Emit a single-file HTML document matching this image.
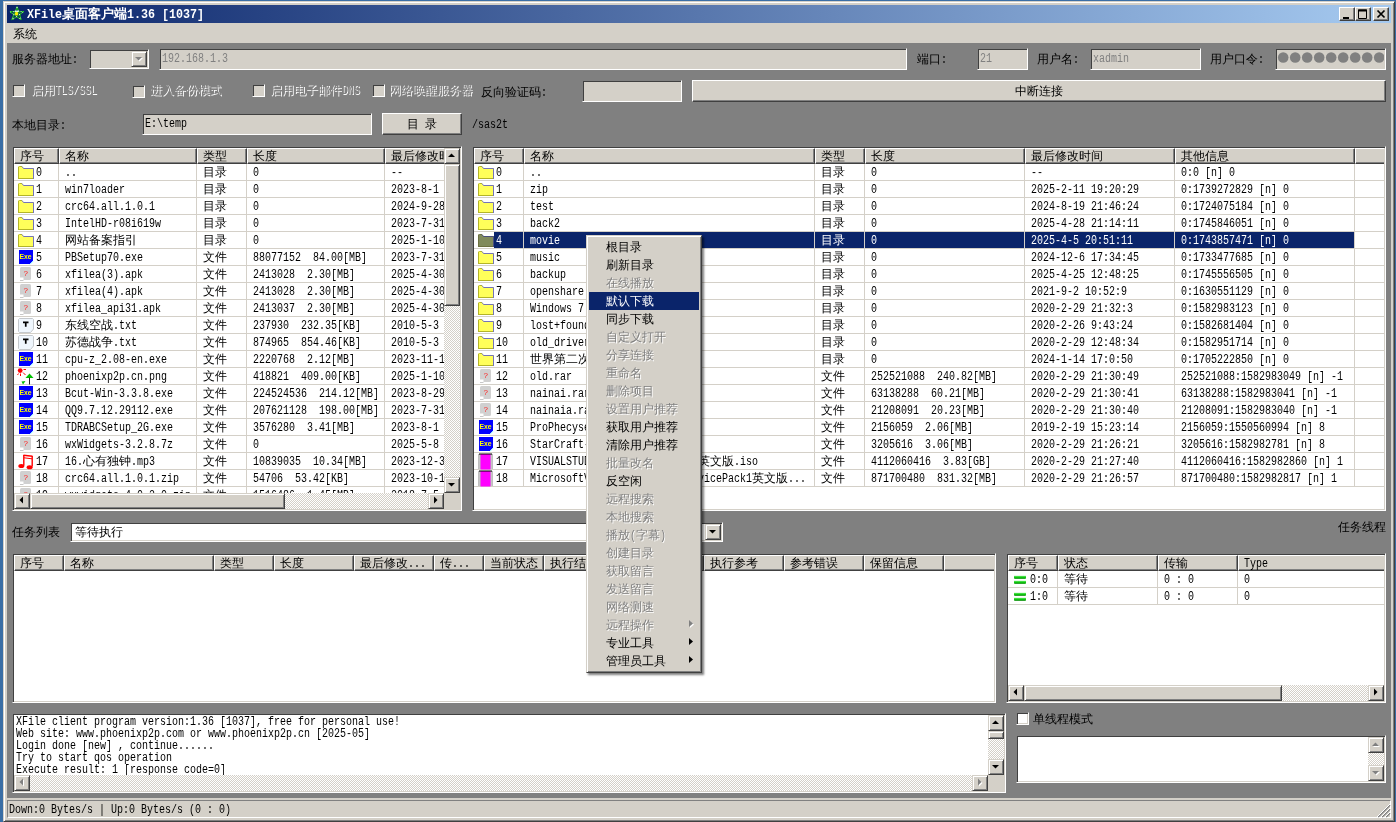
<!DOCTYPE html>
<html><head><meta charset="utf-8"><title>XFile</title>
<style>
html,body{margin:0;padding:0}
html{overflow:hidden}
body{width:1396px;height:822px;overflow:hidden;background:#3a6ea5;position:relative;font:12px/16px "Liberation Sans",sans-serif;color:#000}
div,svg{position:absolute;box-sizing:border-box}
i{font-style:normal}
.t{white-space:nowrap;overflow:hidden;height:16px;line-height:16px;font:12px/16px "Liberation Sans",sans-serif}
.t i{display:inline-block;position:relative;height:16px;vertical-align:top;white-space:pre;overflow:visible}
.a{font:12px/16px "Liberation Mono",monospace;transform:scaleX(.83333);transform-origin:0 0;top:0}
.c{font:12px/16px "Liberation Sans",sans-serif;overflow:hidden!important;top:-1px}
.w{color:#fff}
.g{color:#808080}
.dis{color:#808080;text-shadow:1px 1px 0 #fff}
.bold .a{font-weight:bold}
.ttl .a{transform:scaleX(.9722)}
.ttl .c{font-size:13px}
.bold .c{font-weight:bold}
.win{background:#d4d0c8;border:1px solid;border-color:#d4d0c8 #404040 #404040 #d4d0c8;box-shadow:inset 1px 1px 0 #fff,inset -1px -1px 0 #808080}
.cli{background:#808080}
.sunk{border:1px solid;border-color:#808080 #fff #fff #808080;box-shadow:inset 1px 1px 0 #404040,inset -1px -1px 0 #d4d0c8;background:#fff}
.face{background:#d4d0c8}
.btn{background:#d4d0c8;border:1px solid;border-color:#fff #404040 #404040 #fff;box-shadow:inset -1px -1px 0 #808080}
.sb{width:16px;height:16px;background:#d4d0c8;border:1px solid;border-color:#d4d0c8 #404040 #404040 #d4d0c8;box-shadow:inset 1px 1px 0 #fff,inset -1px -1px 0 #808080}
.th{background:#d4d0c8;border:1px solid;border-color:#d4d0c8 #404040 #404040 #d4d0c8;box-shadow:inset 1px 1px 0 #fff,inset -1px -1px 0 #808080}
.trk{background:repeating-conic-gradient(#fff 0 25%,#d4d0c8 0 50%) 0 0/2px 2px}
.hd{height:16px;background:#d4d0c8;border:1px solid;border-color:#fff #404040 #404040 #fff;box-shadow:inset -1px -1px 0 #808080;overflow:hidden}
.hx{border-color:#d4d0c8 #d4d0c8 #404040 #d4d0c8;box-shadow:inset 0 -1px 0 #808080}
.clip{overflow:hidden}
.gl{background:#d4d0c8}
.sel{background:#0a246a}
.ic{overflow:hidden}
.cb{width:13px;height:13px;border:1px solid;border-color:#808080 #fff #fff #808080;box-shadow:inset 1px 1px 0 #404040,inset -1px -1px 0 #d4d0c8}
.mi{left:2px;width:110px;height:18px}
.mi .t{left:17px;top:2px}
.hl{background:#0a246a}
</style></head><body><div id="root" style="left:0;top:0;width:1396px;height:822px;overflow:hidden;will-change:transform">

<div class="win" style="left:3px;top:1px;width:1392px;height:821px;"></div>
<div class="" style="left:7px;top:5px;width:1384px;height:18px;background:linear-gradient(90deg,#0a246a,#a6caf0)"></div>
<svg style="left:8px;top:5px" width="18" height="18" viewBox="0 0 18 18"><g transform="translate(9 9) scale(.9) translate(-9 -9.200)"><path d="M9.1 1.2L13.5 15.5L1.2 6.6H16.5L3.3 15.700Z" fill="none" stroke="#14b414" stroke-width="1"/><path d="M9.1 1.2L11 6.500L16.5 6.5L12.2 10L13.5 15.5L8.600 12.4L3.3 15.7L5.3 10L1.2 6.600L7.2 6.500Z" fill="none" stroke="#22c022" stroke-width=".8"/><path d="M9.1 1.2L13.5 15.5L1.2 6.6H16.5L3.3 15.700Z" fill="none" stroke="#fff" stroke-width="1" stroke-dasharray="1 3.2" opacity=".85"/><path d="M6.5 6.200H11" stroke="#e8fff0" stroke-width="1.4"/><ellipse cx="8.5" cy="8.800" rx="1.9" ry="2.1" fill="#f6ee00"/></g></svg>
<div class="t w bold ttl" style="left:27px;top:7px;width:300px"><i class="a" style="width:35px">XFile</i><i class="c" style="width:65px">桌面客户端</i><i class="a" style="width:77px">1.36 [1037]</i></div>
<div class="btn" style="left:1339px;top:7px;width:16px;height:14px;"><svg width="14" height="12" viewBox="0 0 14 12" style="left:0;top:0"><path d="M3 9H9V11H3Z" fill="#000"/></svg></div>
<div class="btn" style="left:1355px;top:7px;width:16px;height:14px;"><svg width="14" height="12" viewBox="0 0 14 12" style="left:0;top:0"><path d="M2.5 2H10.500V10.500H2.5Z" fill="none" stroke="#000"/><path d="M2 2.500H11" stroke="#000" stroke-width="2"/></svg></div>
<div class="btn" style="left:1373px;top:7px;width:16px;height:14px;"><svg width="14" height="12" viewBox="0 0 14 12" style="left:0;top:0"><path d="M3.5 2.5L10.5 9.5M10.5 2.5L3.5 9.5" stroke="#000" stroke-width="1.7"/></svg></div>
<div class="t " style="left:13px;top:27px;width:60px;"><i class="c" style="width:24px">系统</i></div>
<div class="cli" style="left:7px;top:43px;width:1384px;height:755px;"></div>
<div class="t " style="left:12px;top:52px;width:80px;"><i class="c" style="width:60px">服务器地址</i><i class="a" style="width:6px">:</i></div>
<div class="sunk face" style="left:89px;top:49px;width:60px;height:20px;"></div>
<div class="sb" style="left:131px;top:51px;width:16px;height:16px;"><svg width="16" height="16" viewBox="0 0 16 16" style="left:-1px;top:-1px"><path d="M5 7L8.5 10.5L12 7Z" fill="#fff"/><path d="M4 6L7.5 9.5L11 6Z" fill="#808080"/></svg></div>
<div class="sunk face" style="left:159px;top:48px;width:748px;height:22px;"></div>
<div class="t g" style="left:162px;top:51px;width:200px;"><i class="a" style="width:66px">192.168.1.3</i></div>
<div class="t " style="left:917px;top:52px;width:60px;"><i class="c" style="width:24px">端口</i><i class="a" style="width:6px">:</i></div>
<div class="sunk face" style="left:977px;top:48px;width:51px;height:22px;"></div>
<div class="t g" style="left:980px;top:51px;width:40px;"><i class="a" style="width:12px">21</i></div>
<div class="t " style="left:1037px;top:52px;width:60px;"><i class="c" style="width:36px">用户名</i><i class="a" style="width:6px">:</i></div>
<div class="sunk face" style="left:1090px;top:48px;width:111px;height:22px;"></div>
<div class="t g" style="left:1093px;top:51px;width:80px;"><i class="a" style="width:36px">xadmin</i></div>
<div class="t " style="left:1210px;top:52px;width:70px;"><i class="c" style="width:48px">用户口令</i><i class="a" style="width:6px">:</i></div>
<div class="sunk face" style="left:1275px;top:48px;width:111px;height:22px;"></div>
<svg style="left:1277px;top:51px" width="107" height="16" viewBox="0 0 107 16"><circle cx="6.2" cy="6.5" r="5.3" fill="#808080"/><circle cx="18.2" cy="6.5" r="5.3" fill="#808080"/><circle cx="30.2" cy="6.5" r="5.3" fill="#808080"/><circle cx="42.2" cy="6.5" r="5.3" fill="#808080"/><circle cx="54.2" cy="6.5" r="5.3" fill="#808080"/><circle cx="66.2" cy="6.5" r="5.3" fill="#808080"/><circle cx="78.2" cy="6.5" r="5.3" fill="#808080"/><circle cx="90.2" cy="6.5" r="5.3" fill="#808080"/><circle cx="102.2" cy="6.5" r="5.3" fill="#808080"/><circle cx="114.2" cy="6.5" r="5.3" fill="#808080"/></svg>
<div class="cb face" style="left:12px;top:84px;width:13px;height:13px;"></div>
<div class="t dis" style="left:31px;top:83px;width:110px;"><i class="c" style="width:24px">启用</i><i class="a" style="width:42px">TLS/SSL</i></div>
<div class="cb face" style="left:132px;top:85px;width:13px;height:13px;"></div>
<div class="t dis" style="left:150px;top:83px;width:110px;"><i class="c" style="width:72px">进入备份模式</i></div>
<div class="cb face" style="left:252px;top:84px;width:13px;height:13px;"></div>
<div class="t dis" style="left:270px;top:83px;width:110px;"><i class="c" style="width:72px">启用电子邮件</i><i class="a" style="width:18px">DNS</i></div>
<div class="cb face" style="left:372px;top:84px;width:13px;height:13px;"></div>
<div class="t dis" style="left:389px;top:83px;width:110px;"><i class="c" style="width:84px">网络唤醒服务器</i></div>
<div class="t " style="left:481px;top:85px;width:80px;"><i class="c" style="width:60px">反向验证码</i><i class="a" style="width:6px">:</i></div>
<div class="sunk face" style="left:582px;top:80px;width:100px;height:22px;"></div>
<div class="btn" style="left:692px;top:80px;width:694px;height:22px;"></div>
<div class="t " style="left:1015px;top:84px;width:60px;"><i class="c" style="width:48px">中断连接</i></div>
<div class="t " style="left:12px;top:118px;width:80px;"><i class="c" style="width:48px">本地目录</i><i class="a" style="width:6px">:</i></div>
<div class="sunk face" style="left:142px;top:113px;width:230px;height:22px;"></div>
<div class="t " style="left:145px;top:116px;width:200px;"><i class="a" style="width:42px">E:\temp</i></div>
<div class="btn" style="left:382px;top:113px;width:80px;height:22px;"></div>
<div class="t " style="left:407px;top:117px;width:14px;"><i class="c" style="width:12px">目</i></div>
<div class="t " style="left:425px;top:117px;width:14px;"><i class="c" style="width:12px">录</i></div>
<div class="t " style="left:472px;top:117px;width:100px;"><i class="a" style="width:36px">/sas2t</i></div>
<div class="sunk" style="left:12px;top:146px;width:450px;height:365px;"></div>
<div class="clip" style="left:14px;top:148px;width:430px;height:16px">
<div class="hd" style="left:0px;top:0;width:45px"><div class="t" style="left:5px;top:0px;width:38px"><i class="c" style="width:24px">序号</i></div></div>
<div class="hd" style="left:45px;top:0;width:138px"><div class="t" style="left:5px;top:0px;width:131px"><i class="c" style="width:24px">名称</i></div></div>
<div class="hd" style="left:183px;top:0;width:50px"><div class="t" style="left:5px;top:0px;width:43px"><i class="c" style="width:24px">类型</i></div></div>
<div class="hd" style="left:233px;top:0;width:138px"><div class="t" style="left:5px;top:0px;width:131px"><i class="c" style="width:24px">长度</i></div></div>
<div class="hd" style="left:371px;top:0;width:150px"><div class="t" style="left:5px;top:0px;width:143px"><i class="c" style="width:72px">最后修改时间</i></div></div>
</div>
<div class="clip" style="left:14px;top:164px;width:430px;height:329px">
<div class="gl" style="left:0;top:16px;width:430px;height:1px"></div>
<div class="gl" style="left:0;top:33px;width:430px;height:1px"></div>
<div class="gl" style="left:0;top:50px;width:430px;height:1px"></div>
<div class="gl" style="left:0;top:67px;width:430px;height:1px"></div>
<div class="gl" style="left:0;top:84px;width:430px;height:1px"></div>
<div class="gl" style="left:0;top:101px;width:430px;height:1px"></div>
<div class="gl" style="left:0;top:118px;width:430px;height:1px"></div>
<div class="gl" style="left:0;top:135px;width:430px;height:1px"></div>
<div class="gl" style="left:0;top:152px;width:430px;height:1px"></div>
<div class="gl" style="left:0;top:169px;width:430px;height:1px"></div>
<div class="gl" style="left:0;top:186px;width:430px;height:1px"></div>
<div class="gl" style="left:0;top:203px;width:430px;height:1px"></div>
<div class="gl" style="left:0;top:220px;width:430px;height:1px"></div>
<div class="gl" style="left:0;top:237px;width:430px;height:1px"></div>
<div class="gl" style="left:0;top:254px;width:430px;height:1px"></div>
<div class="gl" style="left:0;top:271px;width:430px;height:1px"></div>
<div class="gl" style="left:0;top:288px;width:430px;height:1px"></div>
<div class="gl" style="left:0;top:305px;width:430px;height:1px"></div>
<div class="gl" style="left:0;top:322px;width:430px;height:1px"></div>
<div class="gl" style="left:0;top:339px;width:430px;height:1px"></div>
<div class="gl" style="left:44px;top:0;width:1px;height:329px"></div>
<div class="gl" style="left:182px;top:0;width:1px;height:329px"></div>
<div class="gl" style="left:232px;top:0;width:1px;height:329px"></div>
<div class="gl" style="left:370px;top:0;width:1px;height:329px"></div>
<div class="gl" style="left:520px;top:0;width:1px;height:329px"></div>
<svg class="ic" style="left:3px;top:0px" width="18" height="17" viewBox="0 0 18 17"><path d="M1 4.500V2.5H5L6.5 4H17V15H1Z" fill="#ffff5a"/><path d="M1.5 15V3L2.5 2.5H5" fill="none" stroke="#b4b428"/><path d="M1 14.500H17" fill="none" stroke="#b4b428"/><path d="M5 2.5L6.5 4.5H16.5V15" fill="none" stroke="#7474b8"/></svg>
<div class="t" style="left:22px;top:1px;width:23px"><i class="a" style="width:6px">0</i></div>
<div class="t" style="left:51px;top:1px;width:130px"><i class="a" style="width:12px">..</i></div>
<div class="t" style="left:189px;top:1px;width:42px"><i class="c" style="width:24px">目录</i></div>
<div class="t" style="left:239px;top:1px;width:130px"><i class="a" style="width:6px">0</i></div>
<div class="t" style="left:377px;top:1px;width:142px"><i class="a" style="width:12px">--</i></div>
<svg class="ic" style="left:3px;top:17px" width="18" height="17" viewBox="0 0 18 17"><path d="M1 4.500V2.5H5L6.5 4H17V15H1Z" fill="#ffff5a"/><path d="M1.5 15V3L2.5 2.5H5" fill="none" stroke="#b4b428"/><path d="M1 14.500H17" fill="none" stroke="#b4b428"/><path d="M5 2.5L6.5 4.5H16.5V15" fill="none" stroke="#7474b8"/></svg>
<div class="t" style="left:22px;top:18px;width:23px"><i class="a" style="width:6px">1</i></div>
<div class="t" style="left:51px;top:18px;width:130px"><i class="a" style="width:60px">win7loader</i></div>
<div class="t" style="left:189px;top:18px;width:42px"><i class="c" style="width:24px">目录</i></div>
<div class="t" style="left:239px;top:18px;width:130px"><i class="a" style="width:6px">0</i></div>
<div class="t" style="left:377px;top:18px;width:142px"><i class="a" style="width:102px">2023-8-1 10:22:31</i></div>
<svg class="ic" style="left:3px;top:34px" width="18" height="17" viewBox="0 0 18 17"><path d="M1 4.500V2.5H5L6.5 4H17V15H1Z" fill="#ffff5a"/><path d="M1.5 15V3L2.5 2.5H5" fill="none" stroke="#b4b428"/><path d="M1 14.500H17" fill="none" stroke="#b4b428"/><path d="M5 2.5L6.5 4.5H16.5V15" fill="none" stroke="#7474b8"/></svg>
<div class="t" style="left:22px;top:35px;width:23px"><i class="a" style="width:6px">2</i></div>
<div class="t" style="left:51px;top:35px;width:130px"><i class="a" style="width:90px">crc64.all.1.0.1</i></div>
<div class="t" style="left:189px;top:35px;width:42px"><i class="c" style="width:24px">目录</i></div>
<div class="t" style="left:239px;top:35px;width:130px"><i class="a" style="width:6px">0</i></div>
<div class="t" style="left:377px;top:35px;width:142px"><i class="a" style="width:108px">2024-9-28 21:46:24</i></div>
<svg class="ic" style="left:3px;top:51px" width="18" height="17" viewBox="0 0 18 17"><path d="M1 4.500V2.5H5L6.5 4H17V15H1Z" fill="#ffff5a"/><path d="M1.5 15V3L2.5 2.5H5" fill="none" stroke="#b4b428"/><path d="M1 14.500H17" fill="none" stroke="#b4b428"/><path d="M5 2.5L6.5 4.5H16.5V15" fill="none" stroke="#7474b8"/></svg>
<div class="t" style="left:22px;top:52px;width:23px"><i class="a" style="width:6px">3</i></div>
<div class="t" style="left:51px;top:52px;width:130px"><i class="a" style="width:96px">IntelHD-r08i619w</i></div>
<div class="t" style="left:189px;top:52px;width:42px"><i class="c" style="width:24px">目录</i></div>
<div class="t" style="left:239px;top:52px;width:130px"><i class="a" style="width:6px">0</i></div>
<div class="t" style="left:377px;top:52px;width:142px"><i class="a" style="width:108px">2023-7-31 21:14:11</i></div>
<svg class="ic" style="left:3px;top:68px" width="18" height="17" viewBox="0 0 18 17"><path d="M1 4.500V2.5H5L6.5 4H17V15H1Z" fill="#ffff5a"/><path d="M1.5 15V3L2.5 2.5H5" fill="none" stroke="#b4b428"/><path d="M1 14.500H17" fill="none" stroke="#b4b428"/><path d="M5 2.5L6.5 4.5H16.5V15" fill="none" stroke="#7474b8"/></svg>
<div class="t" style="left:22px;top:69px;width:23px"><i class="a" style="width:6px">4</i></div>
<div class="t" style="left:51px;top:69px;width:130px"><i class="c" style="width:72px">网站备案指引</i></div>
<div class="t" style="left:189px;top:69px;width:42px"><i class="c" style="width:24px">目录</i></div>
<div class="t" style="left:239px;top:69px;width:130px"><i class="a" style="width:6px">0</i></div>
<div class="t" style="left:377px;top:69px;width:142px"><i class="a" style="width:108px">2025-1-10 20:51:11</i></div>
<svg class="ic" style="left:3px;top:85px" width="18" height="17" viewBox="0 0 18 17"><path d="M2 1H16V12L13 15H2Z" fill="#0000ff"/><path d="M16 12L13 15H16Z" fill="#fff"/><path d="M13 15.300L16.300 12" stroke="#9ff" stroke-width="1"/><text x="2.600" y="10.2" font-family="Liberation Sans" font-weight="bold" font-size="7.800" fill="#ffff00" textLength="12" lengthAdjust="spacingAndGlyphs">Exe</text></svg>
<div class="t" style="left:22px;top:86px;width:23px"><i class="a" style="width:6px">5</i></div>
<div class="t" style="left:51px;top:86px;width:130px"><i class="a" style="width:78px">PBSetup70.exe</i></div>
<div class="t" style="left:189px;top:86px;width:42px"><i class="c" style="width:24px">文件</i></div>
<div class="t" style="left:239px;top:86px;width:130px"><i class="a" style="width:114px">88077152  84.00[MB]</i></div>
<div class="t" style="left:377px;top:86px;width:142px"><i class="a" style="width:108px">2023-7-31 17:34:45</i></div>
<svg class="ic" style="left:3px;top:102px" width="18" height="17" viewBox="0 0 18 17"><rect x="3" y="1" width="11" height="13" rx="1.5" fill="#d0d0d0"/><path d="M3 11.500H6.500V14H3Z" fill="#fff"/><path d="M3 14.500H6.500" stroke="#c8c8c8"/><text x="6.500" y="10.2" font-family="Liberation Sans" font-size="8" fill="#ff2020">?</text></svg>
<div class="t" style="left:22px;top:103px;width:23px"><i class="a" style="width:6px">6</i></div>
<div class="t" style="left:51px;top:103px;width:130px"><i class="a" style="width:78px">xfilea(3).apk</i></div>
<div class="t" style="left:189px;top:103px;width:42px"><i class="c" style="width:24px">文件</i></div>
<div class="t" style="left:239px;top:103px;width:130px"><i class="a" style="width:102px">2413028  2.30[MB]</i></div>
<div class="t" style="left:377px;top:103px;width:142px"><i class="a" style="width:108px">2025-4-30 12:48:25</i></div>
<svg class="ic" style="left:3px;top:119px" width="18" height="17" viewBox="0 0 18 17"><rect x="3" y="1" width="11" height="13" rx="1.5" fill="#d0d0d0"/><path d="M3 11.500H6.500V14H3Z" fill="#fff"/><path d="M3 14.500H6.500" stroke="#c8c8c8"/><text x="6.500" y="10.2" font-family="Liberation Sans" font-size="8" fill="#ff2020">?</text></svg>
<div class="t" style="left:22px;top:120px;width:23px"><i class="a" style="width:6px">7</i></div>
<div class="t" style="left:51px;top:120px;width:130px"><i class="a" style="width:78px">xfilea(4).apk</i></div>
<div class="t" style="left:189px;top:120px;width:42px"><i class="c" style="width:24px">文件</i></div>
<div class="t" style="left:239px;top:120px;width:130px"><i class="a" style="width:102px">2413028  2.30[MB]</i></div>
<div class="t" style="left:377px;top:120px;width:142px"><i class="a" style="width:108px">2025-4-30 10:52:09</i></div>
<svg class="ic" style="left:3px;top:136px" width="18" height="17" viewBox="0 0 18 17"><rect x="3" y="1" width="11" height="13" rx="1.5" fill="#d0d0d0"/><path d="M3 11.500H6.500V14H3Z" fill="#fff"/><path d="M3 14.500H6.500" stroke="#c8c8c8"/><text x="6.500" y="10.2" font-family="Liberation Sans" font-size="8" fill="#ff2020">?</text></svg>
<div class="t" style="left:22px;top:137px;width:23px"><i class="a" style="width:6px">8</i></div>
<div class="t" style="left:51px;top:137px;width:130px"><i class="a" style="width:96px">xfilea_api31.apk</i></div>
<div class="t" style="left:189px;top:137px;width:42px"><i class="c" style="width:24px">文件</i></div>
<div class="t" style="left:239px;top:137px;width:130px"><i class="a" style="width:102px">2413037  2.30[MB]</i></div>
<div class="t" style="left:377px;top:137px;width:142px"><i class="a" style="width:108px">2025-4-30 21:32:03</i></div>
<svg class="ic" style="left:3px;top:153px" width="18" height="17" viewBox="0 0 18 17"><path d="M1.5 2.5L2.500 1.5H15.5L16.500 2.5V12L13.500 15.5H2.500L1.5 14.500Z" fill="#eff6fd" stroke="#c4c8cc"/><path d="M6 4.500H11.500V6.200H9.600V9.700H7.900V6.200H6Z" fill="#000"/></svg>
<div class="t" style="left:22px;top:154px;width:23px"><i class="a" style="width:6px">9</i></div>
<div class="t" style="left:51px;top:154px;width:130px"><i class="c" style="width:48px">东线空战</i><i class="a" style="width:24px">.txt</i></div>
<div class="t" style="left:189px;top:154px;width:42px"><i class="c" style="width:24px">文件</i></div>
<div class="t" style="left:239px;top:154px;width:130px"><i class="a" style="width:108px">237930  232.35[KB]</i></div>
<div class="t" style="left:377px;top:154px;width:142px"><i class="a" style="width:96px">2010-5-3 9:43:24</i></div>
<svg class="ic" style="left:3px;top:170px" width="18" height="17" viewBox="0 0 18 17"><path d="M1.5 2.5L2.500 1.5H15.5L16.500 2.5V12L13.500 15.5H2.500L1.5 14.500Z" fill="#eff6fd" stroke="#c4c8cc"/><path d="M6 4.500H11.500V6.200H9.600V9.700H7.900V6.200H6Z" fill="#000"/></svg>
<div class="t" style="left:22px;top:171px;width:23px"><i class="a" style="width:12px">10</i></div>
<div class="t" style="left:51px;top:171px;width:130px"><i class="c" style="width:48px">苏德战争</i><i class="a" style="width:24px">.txt</i></div>
<div class="t" style="left:189px;top:171px;width:42px"><i class="c" style="width:24px">文件</i></div>
<div class="t" style="left:239px;top:171px;width:130px"><i class="a" style="width:108px">874965  854.46[KB]</i></div>
<div class="t" style="left:377px;top:171px;width:142px"><i class="a" style="width:102px">2010-5-3 12:48:34</i></div>
<svg class="ic" style="left:3px;top:187px" width="18" height="17" viewBox="0 0 18 17"><path d="M2 1H16V12L13 15H2Z" fill="#0000ff"/><path d="M16 12L13 15H16Z" fill="#fff"/><path d="M13 15.300L16.300 12" stroke="#9ff" stroke-width="1"/><text x="2.600" y="10.2" font-family="Liberation Sans" font-weight="bold" font-size="7.800" fill="#ffff00" textLength="12" lengthAdjust="spacingAndGlyphs">Exe</text></svg>
<div class="t" style="left:22px;top:188px;width:23px"><i class="a" style="width:12px">11</i></div>
<div class="t" style="left:51px;top:188px;width:130px"><i class="a" style="width:102px">cpu-z_2.08-en.exe</i></div>
<div class="t" style="left:189px;top:188px;width:42px"><i class="c" style="width:24px">文件</i></div>
<div class="t" style="left:239px;top:188px;width:130px"><i class="a" style="width:102px">2220768  2.12[MB]</i></div>
<div class="t" style="left:377px;top:188px;width:142px"><i class="a" style="width:108px">2023-11-15 17:0:50</i></div>
<svg class="ic" style="left:3px;top:204px" width="18" height="17" viewBox="0 0 18 17"><circle cx="3.200" cy="2.600" r="2.4" fill="#ff0000"/><path d="M6.500 1.500H9M6 4.500L8.500 7M3.500 5.500V8M1.500 5.500L0.500 7" stroke="#ff0000" stroke-width="1"/><path d="M8.500 10L12.500 5.500L16.500 10Z" fill="#00c000"/><path d="M12.500 9.500V16.500" stroke="#222" stroke-width="1"/><path d="M4.500 13.500L8.500 13L6 16.500Z" fill="#00c000"/></svg>
<div class="t" style="left:22px;top:205px;width:23px"><i class="a" style="width:12px">12</i></div>
<div class="t" style="left:51px;top:205px;width:130px"><i class="a" style="width:102px">phoenixp2p.cn.png</i></div>
<div class="t" style="left:189px;top:205px;width:42px"><i class="c" style="width:24px">文件</i></div>
<div class="t" style="left:239px;top:205px;width:130px"><i class="a" style="width:108px">418821  409.00[KB]</i></div>
<div class="t" style="left:377px;top:205px;width:142px"><i class="a" style="width:108px">2025-1-10 21:30:49</i></div>
<svg class="ic" style="left:3px;top:221px" width="18" height="17" viewBox="0 0 18 17"><path d="M2 1H16V12L13 15H2Z" fill="#0000ff"/><path d="M16 12L13 15H16Z" fill="#fff"/><path d="M13 15.300L16.300 12" stroke="#9ff" stroke-width="1"/><text x="2.600" y="10.2" font-family="Liberation Sans" font-weight="bold" font-size="7.800" fill="#ffff00" textLength="12" lengthAdjust="spacingAndGlyphs">Exe</text></svg>
<div class="t" style="left:22px;top:222px;width:23px"><i class="a" style="width:12px">13</i></div>
<div class="t" style="left:51px;top:222px;width:130px"><i class="a" style="width:108px">Bcut-Win-3.3.8.exe</i></div>
<div class="t" style="left:189px;top:222px;width:42px"><i class="c" style="width:24px">文件</i></div>
<div class="t" style="left:239px;top:222px;width:130px"><i class="a" style="width:126px">224524536  214.12[MB]</i></div>
<div class="t" style="left:377px;top:222px;width:142px"><i class="a" style="width:108px">2023-8-29 21:30:41</i></div>
<svg class="ic" style="left:3px;top:238px" width="18" height="17" viewBox="0 0 18 17"><path d="M2 1H16V12L13 15H2Z" fill="#0000ff"/><path d="M16 12L13 15H16Z" fill="#fff"/><path d="M13 15.300L16.300 12" stroke="#9ff" stroke-width="1"/><text x="2.600" y="10.2" font-family="Liberation Sans" font-weight="bold" font-size="7.800" fill="#ffff00" textLength="12" lengthAdjust="spacingAndGlyphs">Exe</text></svg>
<div class="t" style="left:22px;top:239px;width:23px"><i class="a" style="width:12px">14</i></div>
<div class="t" style="left:51px;top:239px;width:130px"><i class="a" style="width:108px">QQ9.7.12.29112.exe</i></div>
<div class="t" style="left:189px;top:239px;width:42px"><i class="c" style="width:24px">文件</i></div>
<div class="t" style="left:239px;top:239px;width:130px"><i class="a" style="width:126px">207621128  198.00[MB]</i></div>
<div class="t" style="left:377px;top:239px;width:142px"><i class="a" style="width:108px">2023-7-31 21:30:40</i></div>
<svg class="ic" style="left:3px;top:255px" width="18" height="17" viewBox="0 0 18 17"><path d="M2 1H16V12L13 15H2Z" fill="#0000ff"/><path d="M16 12L13 15H16Z" fill="#fff"/><path d="M13 15.300L16.300 12" stroke="#9ff" stroke-width="1"/><text x="2.600" y="10.2" font-family="Liberation Sans" font-weight="bold" font-size="7.800" fill="#ffff00" textLength="12" lengthAdjust="spacingAndGlyphs">Exe</text></svg>
<div class="t" style="left:22px;top:256px;width:23px"><i class="a" style="width:12px">15</i></div>
<div class="t" style="left:51px;top:256px;width:130px"><i class="a" style="width:108px">TDRABCSetup_2G.exe</i></div>
<div class="t" style="left:189px;top:256px;width:42px"><i class="c" style="width:24px">文件</i></div>
<div class="t" style="left:239px;top:256px;width:130px"><i class="a" style="width:102px">3576280  3.41[MB]</i></div>
<div class="t" style="left:377px;top:256px;width:142px"><i class="a" style="width:102px">2023-8-1 15:23:14</i></div>
<svg class="ic" style="left:3px;top:272px" width="18" height="17" viewBox="0 0 18 17"><rect x="3" y="1" width="11" height="13" rx="1.5" fill="#d0d0d0"/><path d="M3 11.500H6.500V14H3Z" fill="#fff"/><path d="M3 14.500H6.500" stroke="#c8c8c8"/><text x="6.500" y="10.2" font-family="Liberation Sans" font-size="8" fill="#ff2020">?</text></svg>
<div class="t" style="left:22px;top:273px;width:23px"><i class="a" style="width:12px">16</i></div>
<div class="t" style="left:51px;top:273px;width:130px"><i class="a" style="width:108px">wxWidgets-3.2.8.7z</i></div>
<div class="t" style="left:189px;top:273px;width:42px"><i class="c" style="width:24px">文件</i></div>
<div class="t" style="left:239px;top:273px;width:130px"><i class="a" style="width:6px">0</i></div>
<div class="t" style="left:377px;top:273px;width:142px"><i class="a" style="width:102px">2025-5-8 21:26:21</i></div>
<svg class="ic" style="left:3px;top:289px" width="18" height="17" viewBox="0 0 18 17"><path d="M6.5 1.5L15.5 2.5V4L6.5 3Z" fill="#ff0000"/><path d="M6.8 2V12.5M15.2 3V13.5" stroke="#ff0000" stroke-width="1.4" fill="none"/><path d="M7 4.8L15 5.8" stroke="#ff0000" stroke-width="1"/><ellipse cx="4.3" cy="13" rx="3" ry="2" fill="#ff0000"/><ellipse cx="12.6" cy="14.2" rx="3" ry="2" fill="#ff0000"/></svg>
<div class="t" style="left:22px;top:290px;width:23px"><i class="a" style="width:12px">17</i></div>
<div class="t" style="left:51px;top:290px;width:130px"><i class="a" style="width:18px">16.</i><i class="c" style="width:48px">心有独钟</i><i class="a" style="width:24px">.mp3</i></div>
<div class="t" style="left:189px;top:290px;width:42px"><i class="c" style="width:24px">文件</i></div>
<div class="t" style="left:239px;top:290px;width:130px"><i class="a" style="width:114px">10839035  10.34[MB]</i></div>
<div class="t" style="left:377px;top:290px;width:142px"><i class="a" style="width:114px">2023-12-31 21:27:40</i></div>
<svg class="ic" style="left:3px;top:306px" width="18" height="17" viewBox="0 0 18 17"><rect x="3" y="1" width="11" height="13" rx="1.5" fill="#d0d0d0"/><path d="M3 11.500H6.500V14H3Z" fill="#fff"/><path d="M3 14.500H6.500" stroke="#c8c8c8"/><text x="6.500" y="10.2" font-family="Liberation Sans" font-size="8" fill="#ff2020">?</text></svg>
<div class="t" style="left:22px;top:307px;width:23px"><i class="a" style="width:12px">18</i></div>
<div class="t" style="left:51px;top:307px;width:130px"><i class="a" style="width:114px">crc64.all.1.0.1.zip</i></div>
<div class="t" style="left:189px;top:307px;width:42px"><i class="c" style="width:24px">文件</i></div>
<div class="t" style="left:239px;top:307px;width:130px"><i class="a" style="width:96px">54706  53.42[KB]</i></div>
<div class="t" style="left:377px;top:307px;width:142px"><i class="a" style="width:114px">2023-10-15 21:26:57</i></div>
<svg class="ic" style="left:3px;top:323px" width="18" height="17" viewBox="0 0 18 17"><rect x="3" y="1" width="11" height="13" rx="1.5" fill="#d0d0d0"/><path d="M3 11.500H6.500V14H3Z" fill="#fff"/><path d="M3 14.500H6.500" stroke="#c8c8c8"/><text x="6.500" y="10.2" font-family="Liberation Sans" font-size="8" fill="#ff2020">?</text></svg>
<div class="t" style="left:22px;top:324px;width:23px"><i class="a" style="width:12px">19</i></div>
<div class="t" style="left:51px;top:324px;width:130px"><i class="a" style="width:126px">wxwidgets-4.0.2.0.zip</i></div>
<div class="t" style="left:189px;top:324px;width:42px"><i class="c" style="width:24px">文件</i></div>
<div class="t" style="left:239px;top:324px;width:130px"><i class="a" style="width:102px">1516486  1.45[MB]</i></div>
<div class="t" style="left:377px;top:324px;width:142px"><i class="a" style="width:102px">2018-7-5 11:11:11</i></div>
</div>
<div class="trk" style="left:444px;top:148px;width:16px;height:345px;"></div>
<div class="sb" style="left:444px;top:148px"><svg width="16" height="16" viewBox="0 0 16 16" style="position:absolute;left:-1px;top:-1px"><path d="M4 9L7.5 5.5L11 9Z" fill="#000"/></svg></div>
<div class="sb" style="left:444px;top:477px"><svg width="16" height="16" viewBox="0 0 16 16" style="position:absolute;left:-1px;top:-1px"><path d="M4 6L7.5 9.5L11 6Z" fill="#000"/></svg></div>
<div class="th" style="left:444px;top:164px;width:16px;height:142px;"></div>
<div class="trk" style="left:14px;top:493px;width:430px;height:16px;"></div>
<div class="sb" style="left:14px;top:493px"><svg width="16" height="16" viewBox="0 0 16 16" style="position:absolute;left:-1px;top:-1px"><path d="M9 3.5L5.5 7L9 10.5Z" fill="#000"/></svg></div>
<div class="sb" style="left:428px;top:493px"><svg width="16" height="16" viewBox="0 0 16 16" style="position:absolute;left:-1px;top:-1px"><path d="M6 3.5L9.5 7L6 10.5Z" fill="#000"/></svg></div>
<div class="th" style="left:30px;top:493px;width:255px;height:16px;"></div>
<div class="face" style="left:444px;top:493px;width:16px;height:16px;"></div>
<div class="sunk" style="left:472px;top:146px;width:914px;height:365px;"></div>
<div class="clip" style="left:474px;top:148px;width:910px;height:16px">
<div class="hd" style="left:0px;top:0;width:50px"><div class="t" style="left:5px;top:0px;width:43px"><i class="c" style="width:24px">序号</i></div></div>
<div class="hd" style="left:50px;top:0;width:291px"><div class="t" style="left:5px;top:0px;width:284px"><i class="c" style="width:24px">名称</i></div></div>
<div class="hd" style="left:341px;top:0;width:50px"><div class="t" style="left:5px;top:0px;width:43px"><i class="c" style="width:24px">类型</i></div></div>
<div class="hd" style="left:391px;top:0;width:160px"><div class="t" style="left:5px;top:0px;width:153px"><i class="c" style="width:24px">长度</i></div></div>
<div class="hd" style="left:551px;top:0;width:150px"><div class="t" style="left:5px;top:0px;width:143px"><i class="c" style="width:72px">最后修改时间</i></div></div>
<div class="hd" style="left:701px;top:0;width:180px"><div class="t" style="left:5px;top:0px;width:173px"><i class="c" style="width:48px">其他信息</i></div></div>
<div class="hd" style="left:881px;top:0;width:33px"></div>
</div>
<div class="clip" style="left:474px;top:164px;width:910px;height:345px">
<div class="gl" style="left:0;top:16px;width:910px;height:1px"></div>
<div class="gl" style="left:0;top:33px;width:910px;height:1px"></div>
<div class="gl" style="left:0;top:50px;width:910px;height:1px"></div>
<div class="gl" style="left:0;top:67px;width:910px;height:1px"></div>
<div class="gl" style="left:0;top:84px;width:910px;height:1px"></div>
<div class="gl" style="left:0;top:101px;width:910px;height:1px"></div>
<div class="gl" style="left:0;top:118px;width:910px;height:1px"></div>
<div class="gl" style="left:0;top:135px;width:910px;height:1px"></div>
<div class="gl" style="left:0;top:152px;width:910px;height:1px"></div>
<div class="gl" style="left:0;top:169px;width:910px;height:1px"></div>
<div class="gl" style="left:0;top:186px;width:910px;height:1px"></div>
<div class="gl" style="left:0;top:203px;width:910px;height:1px"></div>
<div class="gl" style="left:0;top:220px;width:910px;height:1px"></div>
<div class="gl" style="left:0;top:237px;width:910px;height:1px"></div>
<div class="gl" style="left:0;top:254px;width:910px;height:1px"></div>
<div class="gl" style="left:0;top:271px;width:910px;height:1px"></div>
<div class="gl" style="left:0;top:288px;width:910px;height:1px"></div>
<div class="gl" style="left:0;top:305px;width:910px;height:1px"></div>
<div class="gl" style="left:0;top:322px;width:910px;height:1px"></div>
<div class="gl" style="left:49px;top:0;width:1px;height:323px"></div>
<div class="gl" style="left:340px;top:0;width:1px;height:323px"></div>
<div class="gl" style="left:390px;top:0;width:1px;height:323px"></div>
<div class="gl" style="left:550px;top:0;width:1px;height:323px"></div>
<div class="gl" style="left:700px;top:0;width:1px;height:323px"></div>
<div class="gl" style="left:880px;top:0;width:1px;height:323px"></div>
<svg class="ic" style="left:3px;top:0px" width="18" height="17" viewBox="0 0 18 17"><path d="M1 4.500V2.5H5L6.5 4H17V15H1Z" fill="#ffff5a"/><path d="M1.5 15V3L2.5 2.5H5" fill="none" stroke="#b4b428"/><path d="M1 14.500H17" fill="none" stroke="#b4b428"/><path d="M5 2.5L6.5 4.5H16.5V15" fill="none" stroke="#7474b8"/></svg>
<div class="t" style="left:22px;top:1px;width:28px"><i class="a" style="width:6px">0</i></div>
<div class="t" style="left:56px;top:1px;width:283px"><i class="a" style="width:12px">..</i></div>
<div class="t" style="left:347px;top:1px;width:42px"><i class="c" style="width:24px">目录</i></div>
<div class="t" style="left:397px;top:1px;width:152px"><i class="a" style="width:6px">0</i></div>
<div class="t" style="left:557px;top:1px;width:142px"><i class="a" style="width:12px">--</i></div>
<div class="t" style="left:707px;top:1px;width:172px"><i class="a" style="width:54px">0:0 [n] 0</i></div>
<svg class="ic" style="left:3px;top:17px" width="18" height="17" viewBox="0 0 18 17"><path d="M1 4.500V2.5H5L6.5 4H17V15H1Z" fill="#ffff5a"/><path d="M1.5 15V3L2.5 2.5H5" fill="none" stroke="#b4b428"/><path d="M1 14.500H17" fill="none" stroke="#b4b428"/><path d="M5 2.5L6.5 4.5H16.5V15" fill="none" stroke="#7474b8"/></svg>
<div class="t" style="left:22px;top:18px;width:28px"><i class="a" style="width:6px">1</i></div>
<div class="t" style="left:56px;top:18px;width:283px"><i class="a" style="width:18px">zip</i></div>
<div class="t" style="left:347px;top:18px;width:42px"><i class="c" style="width:24px">目录</i></div>
<div class="t" style="left:397px;top:18px;width:152px"><i class="a" style="width:6px">0</i></div>
<div class="t" style="left:557px;top:18px;width:142px"><i class="a" style="width:108px">2025-2-11 19:20:29</i></div>
<div class="t" style="left:707px;top:18px;width:172px"><i class="a" style="width:108px">0:1739272829 [n] 0</i></div>
<svg class="ic" style="left:3px;top:34px" width="18" height="17" viewBox="0 0 18 17"><path d="M1 4.500V2.5H5L6.5 4H17V15H1Z" fill="#ffff5a"/><path d="M1.5 15V3L2.5 2.5H5" fill="none" stroke="#b4b428"/><path d="M1 14.500H17" fill="none" stroke="#b4b428"/><path d="M5 2.5L6.5 4.5H16.5V15" fill="none" stroke="#7474b8"/></svg>
<div class="t" style="left:22px;top:35px;width:28px"><i class="a" style="width:6px">2</i></div>
<div class="t" style="left:56px;top:35px;width:283px"><i class="a" style="width:24px">test</i></div>
<div class="t" style="left:347px;top:35px;width:42px"><i class="c" style="width:24px">目录</i></div>
<div class="t" style="left:397px;top:35px;width:152px"><i class="a" style="width:6px">0</i></div>
<div class="t" style="left:557px;top:35px;width:142px"><i class="a" style="width:108px">2024-8-19 21:46:24</i></div>
<div class="t" style="left:707px;top:35px;width:172px"><i class="a" style="width:108px">0:1724075184 [n] 0</i></div>
<svg class="ic" style="left:3px;top:51px" width="18" height="17" viewBox="0 0 18 17"><path d="M1 4.500V2.5H5L6.5 4H17V15H1Z" fill="#ffff5a"/><path d="M1.5 15V3L2.5 2.5H5" fill="none" stroke="#b4b428"/><path d="M1 14.500H17" fill="none" stroke="#b4b428"/><path d="M5 2.5L6.5 4.5H16.5V15" fill="none" stroke="#7474b8"/></svg>
<div class="t" style="left:22px;top:52px;width:28px"><i class="a" style="width:6px">3</i></div>
<div class="t" style="left:56px;top:52px;width:283px"><i class="a" style="width:30px">back2</i></div>
<div class="t" style="left:347px;top:52px;width:42px"><i class="c" style="width:24px">目录</i></div>
<div class="t" style="left:397px;top:52px;width:152px"><i class="a" style="width:6px">0</i></div>
<div class="t" style="left:557px;top:52px;width:142px"><i class="a" style="width:108px">2025-4-28 21:14:11</i></div>
<div class="t" style="left:707px;top:52px;width:172px"><i class="a" style="width:108px">0:1745846051 [n] 0</i></div>
<div class="sel" style="left:20px;top:68px;width:861px;height:16px"></div>
<div class="gl" style="left:49px;top:68px;width:1px;height:16px"></div>
<div class="gl" style="left:340px;top:68px;width:1px;height:16px"></div>
<div class="gl" style="left:390px;top:68px;width:1px;height:16px"></div>
<div class="gl" style="left:550px;top:68px;width:1px;height:16px"></div>
<div class="gl" style="left:700px;top:68px;width:1px;height:16px"></div>
<div class="gl" style="left:880px;top:68px;width:1px;height:16px"></div>
<svg class="ic" style="left:3px;top:68px" width="18" height="17" viewBox="0 0 18 17"><path d="M1 4.500V2.5H5L6.5 4H17V15H1Z" fill="#808a5c"/><path d="M1.5 15V3L2.5 2.5H5" fill="none" stroke="#6c7040"/><path d="M1 14.500H17" fill="none" stroke="#6c7040"/><path d="M5 2.5L6.5 4.5H16.5V15" fill="none" stroke="#4a4e7c"/></svg>
<div class="t w" style="left:22px;top:69px;width:28px"><i class="a" style="width:6px">4</i></div>
<div class="t w" style="left:56px;top:69px;width:283px"><i class="a" style="width:30px">movie</i></div>
<div class="t w" style="left:347px;top:69px;width:42px"><i class="c" style="width:24px">目录</i></div>
<div class="t w" style="left:397px;top:69px;width:152px"><i class="a" style="width:6px">0</i></div>
<div class="t w" style="left:557px;top:69px;width:142px"><i class="a" style="width:102px">2025-4-5 20:51:11</i></div>
<div class="t w" style="left:707px;top:69px;width:172px"><i class="a" style="width:108px">0:1743857471 [n] 0</i></div>
<svg class="ic" style="left:3px;top:85px" width="18" height="17" viewBox="0 0 18 17"><path d="M1 4.500V2.5H5L6.5 4H17V15H1Z" fill="#ffff5a"/><path d="M1.5 15V3L2.5 2.5H5" fill="none" stroke="#b4b428"/><path d="M1 14.500H17" fill="none" stroke="#b4b428"/><path d="M5 2.5L6.5 4.5H16.5V15" fill="none" stroke="#7474b8"/></svg>
<div class="t" style="left:22px;top:86px;width:28px"><i class="a" style="width:6px">5</i></div>
<div class="t" style="left:56px;top:86px;width:283px"><i class="a" style="width:30px">music</i></div>
<div class="t" style="left:347px;top:86px;width:42px"><i class="c" style="width:24px">目录</i></div>
<div class="t" style="left:397px;top:86px;width:152px"><i class="a" style="width:6px">0</i></div>
<div class="t" style="left:557px;top:86px;width:142px"><i class="a" style="width:108px">2024-12-6 17:34:45</i></div>
<div class="t" style="left:707px;top:86px;width:172px"><i class="a" style="width:108px">0:1733477685 [n] 0</i></div>
<svg class="ic" style="left:3px;top:102px" width="18" height="17" viewBox="0 0 18 17"><path d="M1 4.500V2.5H5L6.5 4H17V15H1Z" fill="#ffff5a"/><path d="M1.5 15V3L2.5 2.5H5" fill="none" stroke="#b4b428"/><path d="M1 14.500H17" fill="none" stroke="#b4b428"/><path d="M5 2.5L6.5 4.5H16.5V15" fill="none" stroke="#7474b8"/></svg>
<div class="t" style="left:22px;top:103px;width:28px"><i class="a" style="width:6px">6</i></div>
<div class="t" style="left:56px;top:103px;width:283px"><i class="a" style="width:36px">backup</i></div>
<div class="t" style="left:347px;top:103px;width:42px"><i class="c" style="width:24px">目录</i></div>
<div class="t" style="left:397px;top:103px;width:152px"><i class="a" style="width:6px">0</i></div>
<div class="t" style="left:557px;top:103px;width:142px"><i class="a" style="width:108px">2025-4-25 12:48:25</i></div>
<div class="t" style="left:707px;top:103px;width:172px"><i class="a" style="width:108px">0:1745556505 [n] 0</i></div>
<svg class="ic" style="left:3px;top:119px" width="18" height="17" viewBox="0 0 18 17"><path d="M1 4.500V2.5H5L6.5 4H17V15H1Z" fill="#ffff5a"/><path d="M1.5 15V3L2.5 2.5H5" fill="none" stroke="#b4b428"/><path d="M1 14.500H17" fill="none" stroke="#b4b428"/><path d="M5 2.5L6.5 4.5H16.5V15" fill="none" stroke="#7474b8"/></svg>
<div class="t" style="left:22px;top:120px;width:28px"><i class="a" style="width:6px">7</i></div>
<div class="t" style="left:56px;top:120px;width:283px"><i class="a" style="width:54px">openshare</i></div>
<div class="t" style="left:347px;top:120px;width:42px"><i class="c" style="width:24px">目录</i></div>
<div class="t" style="left:397px;top:120px;width:152px"><i class="a" style="width:6px">0</i></div>
<div class="t" style="left:557px;top:120px;width:142px"><i class="a" style="width:96px">2021-9-2 10:52:9</i></div>
<div class="t" style="left:707px;top:120px;width:172px"><i class="a" style="width:108px">0:1630551129 [n] 0</i></div>
<svg class="ic" style="left:3px;top:136px" width="18" height="17" viewBox="0 0 18 17"><path d="M1 4.500V2.5H5L6.5 4H17V15H1Z" fill="#ffff5a"/><path d="M1.5 15V3L2.5 2.5H5" fill="none" stroke="#b4b428"/><path d="M1 14.500H17" fill="none" stroke="#b4b428"/><path d="M5 2.5L6.5 4.5H16.5V15" fill="none" stroke="#7474b8"/></svg>
<div class="t" style="left:22px;top:137px;width:28px"><i class="a" style="width:6px">8</i></div>
<div class="t" style="left:56px;top:137px;width:283px"><i class="a" style="width:54px">Windows 7</i></div>
<div class="t" style="left:347px;top:137px;width:42px"><i class="c" style="width:24px">目录</i></div>
<div class="t" style="left:397px;top:137px;width:152px"><i class="a" style="width:6px">0</i></div>
<div class="t" style="left:557px;top:137px;width:142px"><i class="a" style="width:102px">2020-2-29 21:32:3</i></div>
<div class="t" style="left:707px;top:137px;width:172px"><i class="a" style="width:108px">0:1582983123 [n] 0</i></div>
<svg class="ic" style="left:3px;top:153px" width="18" height="17" viewBox="0 0 18 17"><path d="M1 4.500V2.5H5L6.5 4H17V15H1Z" fill="#ffff5a"/><path d="M1.5 15V3L2.5 2.5H5" fill="none" stroke="#b4b428"/><path d="M1 14.500H17" fill="none" stroke="#b4b428"/><path d="M5 2.5L6.5 4.5H16.5V15" fill="none" stroke="#7474b8"/></svg>
<div class="t" style="left:22px;top:154px;width:28px"><i class="a" style="width:6px">9</i></div>
<div class="t" style="left:56px;top:154px;width:283px"><i class="a" style="width:60px">lost+found</i></div>
<div class="t" style="left:347px;top:154px;width:42px"><i class="c" style="width:24px">目录</i></div>
<div class="t" style="left:397px;top:154px;width:152px"><i class="a" style="width:6px">0</i></div>
<div class="t" style="left:557px;top:154px;width:142px"><i class="a" style="width:102px">2020-2-26 9:43:24</i></div>
<div class="t" style="left:707px;top:154px;width:172px"><i class="a" style="width:108px">0:1582681404 [n] 0</i></div>
<svg class="ic" style="left:3px;top:170px" width="18" height="17" viewBox="0 0 18 17"><path d="M1 4.500V2.5H5L6.5 4H17V15H1Z" fill="#ffff5a"/><path d="M1.5 15V3L2.5 2.5H5" fill="none" stroke="#b4b428"/><path d="M1 14.500H17" fill="none" stroke="#b4b428"/><path d="M5 2.5L6.5 4.5H16.5V15" fill="none" stroke="#7474b8"/></svg>
<div class="t" style="left:22px;top:171px;width:28px"><i class="a" style="width:12px">10</i></div>
<div class="t" style="left:56px;top:171px;width:283px"><i class="a" style="width:60px">old_driver</i></div>
<div class="t" style="left:347px;top:171px;width:42px"><i class="c" style="width:24px">目录</i></div>
<div class="t" style="left:397px;top:171px;width:152px"><i class="a" style="width:6px">0</i></div>
<div class="t" style="left:557px;top:171px;width:142px"><i class="a" style="width:108px">2020-2-29 12:48:34</i></div>
<div class="t" style="left:707px;top:171px;width:172px"><i class="a" style="width:108px">0:1582951714 [n] 0</i></div>
<svg class="ic" style="left:3px;top:187px" width="18" height="17" viewBox="0 0 18 17"><path d="M1 4.500V2.5H5L6.5 4H17V15H1Z" fill="#ffff5a"/><path d="M1.5 15V3L2.5 2.5H5" fill="none" stroke="#b4b428"/><path d="M1 14.500H17" fill="none" stroke="#b4b428"/><path d="M5 2.5L6.5 4.5H16.5V15" fill="none" stroke="#7474b8"/></svg>
<div class="t" style="left:22px;top:188px;width:28px"><i class="a" style="width:12px">11</i></div>
<div class="t" style="left:56px;top:188px;width:283px"><i class="c" style="width:108px">世界第二次世界大战</i></div>
<div class="t" style="left:347px;top:188px;width:42px"><i class="c" style="width:24px">目录</i></div>
<div class="t" style="left:397px;top:188px;width:152px"><i class="a" style="width:6px">0</i></div>
<div class="t" style="left:557px;top:188px;width:142px"><i class="a" style="width:102px">2024-1-14 17:0:50</i></div>
<div class="t" style="left:707px;top:188px;width:172px"><i class="a" style="width:108px">0:1705222850 [n] 0</i></div>
<svg class="ic" style="left:3px;top:204px" width="18" height="17" viewBox="0 0 18 17"><rect x="3" y="1" width="11" height="13" rx="1.5" fill="#d0d0d0"/><path d="M3 11.500H6.500V14H3Z" fill="#fff"/><path d="M3 14.500H6.500" stroke="#c8c8c8"/><text x="6.500" y="10.2" font-family="Liberation Sans" font-size="8" fill="#ff2020">?</text></svg>
<div class="t" style="left:22px;top:205px;width:28px"><i class="a" style="width:12px">12</i></div>
<div class="t" style="left:56px;top:205px;width:283px"><i class="a" style="width:42px">old.rar</i></div>
<div class="t" style="left:347px;top:205px;width:42px"><i class="c" style="width:24px">文件</i></div>
<div class="t" style="left:397px;top:205px;width:152px"><i class="a" style="width:126px">252521088  240.82[MB]</i></div>
<div class="t" style="left:557px;top:205px;width:142px"><i class="a" style="width:108px">2020-2-29 21:30:49</i></div>
<div class="t" style="left:707px;top:205px;width:172px"><i class="a" style="width:162px">252521088:1582983049 [n] -1</i></div>
<svg class="ic" style="left:3px;top:221px" width="18" height="17" viewBox="0 0 18 17"><rect x="3" y="1" width="11" height="13" rx="1.5" fill="#d0d0d0"/><path d="M3 11.500H6.500V14H3Z" fill="#fff"/><path d="M3 14.500H6.500" stroke="#c8c8c8"/><text x="6.500" y="10.2" font-family="Liberation Sans" font-size="8" fill="#ff2020">?</text></svg>
<div class="t" style="left:22px;top:222px;width:28px"><i class="a" style="width:12px">13</i></div>
<div class="t" style="left:56px;top:222px;width:283px"><i class="a" style="width:60px">nainai.rar</i></div>
<div class="t" style="left:347px;top:222px;width:42px"><i class="c" style="width:24px">文件</i></div>
<div class="t" style="left:397px;top:222px;width:152px"><i class="a" style="width:114px">63138288  60.21[MB]</i></div>
<div class="t" style="left:557px;top:222px;width:142px"><i class="a" style="width:108px">2020-2-29 21:30:41</i></div>
<div class="t" style="left:707px;top:222px;width:172px"><i class="a" style="width:156px">63138288:1582983041 [n] -1</i></div>
<svg class="ic" style="left:3px;top:238px" width="18" height="17" viewBox="0 0 18 17"><rect x="3" y="1" width="11" height="13" rx="1.5" fill="#d0d0d0"/><path d="M3 11.500H6.500V14H3Z" fill="#fff"/><path d="M3 14.500H6.500" stroke="#c8c8c8"/><text x="6.500" y="10.2" font-family="Liberation Sans" font-size="8" fill="#ff2020">?</text></svg>
<div class="t" style="left:22px;top:239px;width:28px"><i class="a" style="width:12px">14</i></div>
<div class="t" style="left:56px;top:239px;width:283px"><i class="a" style="width:66px">nainaia.rar</i></div>
<div class="t" style="left:347px;top:239px;width:42px"><i class="c" style="width:24px">文件</i></div>
<div class="t" style="left:397px;top:239px;width:152px"><i class="a" style="width:114px">21208091  20.23[MB]</i></div>
<div class="t" style="left:557px;top:239px;width:142px"><i class="a" style="width:108px">2020-2-29 21:30:40</i></div>
<div class="t" style="left:707px;top:239px;width:172px"><i class="a" style="width:156px">21208091:1582983040 [n] -1</i></div>
<svg class="ic" style="left:3px;top:255px" width="18" height="17" viewBox="0 0 18 17"><path d="M2 1H16V12L13 15H2Z" fill="#0000ff"/><path d="M16 12L13 15H16Z" fill="#fff"/><path d="M13 15.300L16.300 12" stroke="#9ff" stroke-width="1"/><text x="2.600" y="10.2" font-family="Liberation Sans" font-weight="bold" font-size="7.800" fill="#ffff00" textLength="12" lengthAdjust="spacingAndGlyphs">Exe</text></svg>
<div class="t" style="left:22px;top:256px;width:28px"><i class="a" style="width:12px">15</i></div>
<div class="t" style="left:56px;top:256px;width:283px"><i class="a" style="width:90px">ProPhecyset.exe</i></div>
<div class="t" style="left:347px;top:256px;width:42px"><i class="c" style="width:24px">文件</i></div>
<div class="t" style="left:397px;top:256px;width:152px"><i class="a" style="width:102px">2156059  2.06[MB]</i></div>
<div class="t" style="left:557px;top:256px;width:142px"><i class="a" style="width:108px">2019-2-19 15:23:14</i></div>
<div class="t" style="left:707px;top:256px;width:172px"><i class="a" style="width:144px">2156059:1550560994 [n] 8</i></div>
<svg class="ic" style="left:3px;top:272px" width="18" height="17" viewBox="0 0 18 17"><path d="M2 1H16V12L13 15H2Z" fill="#0000ff"/><path d="M16 12L13 15H16Z" fill="#fff"/><path d="M13 15.300L16.300 12" stroke="#9ff" stroke-width="1"/><text x="2.600" y="10.2" font-family="Liberation Sans" font-weight="bold" font-size="7.800" fill="#ffff00" textLength="12" lengthAdjust="spacingAndGlyphs">Exe</text></svg>
<div class="t" style="left:22px;top:273px;width:28px"><i class="a" style="width:12px">16</i></div>
<div class="t" style="left:56px;top:273px;width:283px"><i class="a" style="width:108px">StarCraft-1.08.exe</i></div>
<div class="t" style="left:347px;top:273px;width:42px"><i class="c" style="width:24px">文件</i></div>
<div class="t" style="left:397px;top:273px;width:152px"><i class="a" style="width:102px">3205616  3.06[MB]</i></div>
<div class="t" style="left:557px;top:273px;width:142px"><i class="a" style="width:108px">2020-2-29 21:26:21</i></div>
<div class="t" style="left:707px;top:273px;width:172px"><i class="a" style="width:144px">3205616:1582982781 [n] 8</i></div>
<svg class="ic" style="left:3px;top:289px" width="18" height="17" viewBox="0 0 18 17"><path d="M2.500 1.500V16M14.500 1.500V16" stroke="#fff" stroke-width="2.400"/><path d="M2.500 1.500V16M14.500 1.500V16" stroke="#484848" stroke-width="2.400" stroke-dasharray="1 1"/><path d="M2.500 1.500V16M14.500 1.500V16" stroke="#fff" stroke-width=".8" stroke-dasharray="1 1" stroke-dashoffset="1"/><rect x="3.500" y="1" width="10" height="15.500" fill="#ff00ff"/><path d="M2 1H15" stroke="#000" stroke-width="1"/></svg>
<div class="t" style="left:22px;top:290px;width:28px"><i class="a" style="width:12px">17</i></div>
<div class="t" style="left:56px;top:290px;width:283px"><i class="a" style="width:168px">VISUALSTUDIO2008PROFESSIONAL</i><i class="c" style="width:36px">英文版</i><i class="a" style="width:24px">.iso</i></div>
<div class="t" style="left:347px;top:290px;width:42px"><i class="c" style="width:24px">文件</i></div>
<div class="t" style="left:397px;top:290px;width:152px"><i class="a" style="width:120px">4112060416  3.83[GB]</i></div>
<div class="t" style="left:557px;top:290px;width:142px"><i class="a" style="width:108px">2020-2-29 21:27:40</i></div>
<div class="t" style="left:707px;top:290px;width:172px"><i class="a" style="width:162px">4112060416:1582982860 [n] 1</i></div>
<svg class="ic" style="left:3px;top:306px" width="18" height="17" viewBox="0 0 18 17"><path d="M2.500 1.500V16M14.500 1.500V16" stroke="#fff" stroke-width="2.400"/><path d="M2.500 1.500V16M14.500 1.500V16" stroke="#484848" stroke-width="2.400" stroke-dasharray="1 1"/><path d="M2.500 1.500V16M14.500 1.500V16" stroke="#fff" stroke-width=".8" stroke-dasharray="1 1" stroke-dashoffset="1"/><rect x="3.500" y="1" width="10" height="15.500" fill="#ff00ff"/><path d="M2 1H15" stroke="#000" stroke-width="1"/></svg>
<div class="t" style="left:22px;top:307px;width:28px"><i class="a" style="width:12px">18</i></div>
<div class="t" style="left:56px;top:307px;width:283px"><i class="a" style="width:222px">MicrosoftVisualStudio2008ServicePack1</i><i class="c" style="width:36px">英文版</i><i class="a" style="width:18px">...</i></div>
<div class="t" style="left:347px;top:307px;width:42px"><i class="c" style="width:24px">文件</i></div>
<div class="t" style="left:397px;top:307px;width:152px"><i class="a" style="width:126px">871700480  831.32[MB]</i></div>
<div class="t" style="left:557px;top:307px;width:142px"><i class="a" style="width:108px">2020-2-29 21:26:57</i></div>
<div class="t" style="left:707px;top:307px;width:172px"><i class="a" style="width:156px">871700480:1582982817 [n] 1</i></div>
</div>
<div class="t " style="left:12px;top:525px;width:60px;"><i class="c" style="width:48px">任务列表</i></div>
<div class="sunk" style="left:70px;top:522px;width:653px;height:20px;"></div>
<div class="t " style="left:75px;top:525px;width:100px;"><i class="c" style="width:48px">等待执行</i></div>
<div class="sb" style="left:705px;top:524px;width:16px;height:16px;"><svg width="16" height="16" viewBox="0 0 16 16" style="left:-1px;top:-1px"><path d="M4 6L7.5 9.5L11 6Z" fill="#000"/></svg></div>
<div class="t " style="left:1338px;top:520px;width:60px;"><i class="c" style="width:48px">任务线程</i></div>
<div class="sunk" style="left:12px;top:553px;width:984px;height:150px;"></div>
<div class="clip" style="left:14px;top:555px;width:980px;height:16px">
<div class="hd" style="left:0px;top:0;width:50px"><div class="t" style="left:5px;top:0px;width:43px"><i class="c" style="width:24px">序号</i></div></div>
<div class="hd" style="left:50px;top:0;width:150px"><div class="t" style="left:5px;top:0px;width:143px"><i class="c" style="width:24px">名称</i></div></div>
<div class="hd" style="left:200px;top:0;width:60px"><div class="t" style="left:5px;top:0px;width:53px"><i class="c" style="width:24px">类型</i></div></div>
<div class="hd" style="left:260px;top:0;width:80px"><div class="t" style="left:5px;top:0px;width:73px"><i class="c" style="width:24px">长度</i></div></div>
<div class="hd" style="left:340px;top:0;width:80px"><div class="t" style="left:5px;top:0px;width:73px"><i class="c" style="width:48px">最后修改</i><i class="a" style="width:18px">...</i></div></div>
<div class="hd" style="left:420px;top:0;width:50px"><div class="t" style="left:5px;top:0px;width:43px"><i class="c" style="width:12px">传</i><i class="a" style="width:18px">...</i></div></div>
<div class="hd" style="left:470px;top:0;width:60px"><div class="t" style="left:5px;top:0px;width:53px"><i class="c" style="width:48px">当前状态</i></div></div>
<div class="hd" style="left:530px;top:0;width:80px"><div class="t" style="left:5px;top:0px;width:73px"><i class="c" style="width:48px">执行结果</i></div></div>
<div class="hd" style="left:610px;top:0;width:80px"><div class="t" style="left:5px;top:0px;width:73px"><i class="c" style="width:48px">执行错误</i></div></div>
<div class="hd" style="left:690px;top:0;width:80px"><div class="t" style="left:5px;top:0px;width:73px"><i class="c" style="width:48px">执行参考</i></div></div>
<div class="hd" style="left:770px;top:0;width:80px"><div class="t" style="left:5px;top:0px;width:73px"><i class="c" style="width:48px">参考错误</i></div></div>
<div class="hd" style="left:850px;top:0;width:80px"><div class="t" style="left:5px;top:0px;width:73px"><i class="c" style="width:48px">保留信息</i></div></div>
<div class="hd" style="left:930px;top:0;width:54px"></div>
</div>
<div class="sunk" style="left:1006px;top:553px;width:380px;height:150px;"></div>
<div class="clip" style="left:1008px;top:555px;width:376px;height:16px">
<div class="hd" style="left:0px;top:0;width:50px"><div class="t" style="left:5px;top:0px;width:43px"><i class="c" style="width:24px">序号</i></div></div>
<div class="hd" style="left:50px;top:0;width:100px"><div class="t" style="left:5px;top:0px;width:93px"><i class="c" style="width:24px">状态</i></div></div>
<div class="hd" style="left:150px;top:0;width:80px"><div class="t" style="left:5px;top:0px;width:73px"><i class="c" style="width:24px">传输</i></div></div>
<div class="hd" style="left:230px;top:0;width:200px"><div class="t" style="left:5px;top:0px;width:193px"><i class="a" style="width:24px">Type</i></div></div>
</div>
<div class="clip" style="left:1008px;top:571px;width:376px;height:114px">
<div class="gl" style="left:0;top:16px;width:376px;height:1px"></div>
<div class="gl" style="left:0;top:33px;width:376px;height:1px"></div>
<div class="gl" style="left:49px;top:0;width:1px;height:34px"></div>
<div class="gl" style="left:149px;top:0;width:1px;height:34px"></div>
<div class="gl" style="left:229px;top:0;width:1px;height:34px"></div>
<div class="gl" style="left:429px;top:0;width:1px;height:34px"></div>
<svg class="ic" style="left:3px;top:0px" width="18" height="17" viewBox="0 0 18 17"><path d="M3 5H15V7.500H3ZM3 10H15V12.500H3Z" fill="#10c810"/><path d="M3 5.300H15M3 10.300H15" stroke="#60e860" stroke-width=".8"/><path d="M3.500 7.400H14.500M3.500 12.400H14.500" stroke="#0a8a0a" stroke-width=".8"/></svg>
<div class="t" style="left:22px;top:1px;width:28px"><i class="a" style="width:18px">0:0</i></div>
<div class="t" style="left:56px;top:1px;width:92px"><i class="c" style="width:24px">等待</i></div>
<div class="t" style="left:156px;top:1px;width:72px"><i class="a" style="width:30px">0 : 0</i></div>
<div class="t" style="left:236px;top:1px;width:192px"><i class="a" style="width:6px">0</i></div>
<svg class="ic" style="left:3px;top:17px" width="18" height="17" viewBox="0 0 18 17"><path d="M3 5H15V7.500H3ZM3 10H15V12.500H3Z" fill="#10c810"/><path d="M3 5.300H15M3 10.300H15" stroke="#60e860" stroke-width=".8"/><path d="M3.500 7.400H14.500M3.500 12.400H14.500" stroke="#0a8a0a" stroke-width=".8"/></svg>
<div class="t" style="left:22px;top:18px;width:28px"><i class="a" style="width:18px">1:0</i></div>
<div class="t" style="left:56px;top:18px;width:92px"><i class="c" style="width:24px">等待</i></div>
<div class="t" style="left:156px;top:18px;width:72px"><i class="a" style="width:30px">0 : 0</i></div>
<div class="t" style="left:236px;top:18px;width:192px"><i class="a" style="width:6px">0</i></div>
</div>
<div class="trk" style="left:1008px;top:685px;width:376px;height:16px;"></div>
<div class="sb" style="left:1008px;top:685px"><svg width="16" height="16" viewBox="0 0 16 16" style="position:absolute;left:-1px;top:-1px"><path d="M9 3.5L5.5 7L9 10.5Z" fill="#000"/></svg></div>
<div class="sb" style="left:1368px;top:685px"><svg width="16" height="16" viewBox="0 0 16 16" style="position:absolute;left:-1px;top:-1px"><path d="M6 3.5L9.5 7L6 10.5Z" fill="#000"/></svg></div>
<div class="th" style="left:1024px;top:685px;width:258px;height:16px;"></div>
<div class="sunk" style="left:12px;top:713px;width:994px;height:80px;"></div>
<div class="t " style="left:16px;top:714px;width:960px;"><i class="a" style="width:384px">XFile client program version:1.36 [1037], free for personal use!</i></div>
<div class="t " style="left:16px;top:726px;width:960px;"><i class="a" style="width:354px">Web site: www.phoenixp2p.com or www.phoenixp2p.cn [2025-05]</i></div>
<div class="t " style="left:16px;top:738px;width:960px;"><i class="a" style="width:198px">Login done [new] , continue......</i></div>
<div class="t " style="left:16px;top:750px;width:960px;"><i class="a" style="width:156px">Try to start qos operation</i></div>
<div class="t " style="left:16px;top:762px;width:960px;"><i class="a" style="width:210px">Execute result: 1 [response code=0]</i></div>
<div class="trk" style="left:988px;top:715px;width:16px;height:60px;"></div>
<div class="sb" style="left:988px;top:715px"><svg width="16" height="16" viewBox="0 0 16 16" style="position:absolute;left:-1px;top:-1px"><path d="M4 9L7.5 5.5L11 9Z" fill="#000"/></svg></div>
<div class="sb" style="left:988px;top:759px"><svg width="16" height="16" viewBox="0 0 16 16" style="position:absolute;left:-1px;top:-1px"><path d="M4 6L7.5 9.5L11 6Z" fill="#000"/></svg></div>
<div class="th" style="left:988px;top:731px;width:16px;height:8px;"></div>
<div class="trk" style="left:14px;top:775px;width:974px;height:16px;"></div>
<div class="sb" style="left:14px;top:775px"><svg width="16" height="16" viewBox="0 0 16 16" style="position:absolute;left:-1px;top:-1px"><path d="M9 3.5L5.5 7L9 10.5Z" fill="#fff" transform="translate(1,1)"/><path d="M9 3.5L5.5 7L9 10.5Z" fill="#808080"/></svg></div>
<div class="sb" style="left:972px;top:775px"><svg width="16" height="16" viewBox="0 0 16 16" style="position:absolute;left:-1px;top:-1px"><path d="M6 3.5L9.5 7L6 10.5Z" fill="#fff" transform="translate(1,1)"/><path d="M6 3.5L9.5 7L6 10.5Z" fill="#808080"/></svg></div>
<div class="face" style="left:988px;top:775px;width:16px;height:16px;"></div>
<div class="cb" style="left:1016px;top:712px;width:13px;height:13px;background:#fff"></div>
<div class="t " style="left:1033px;top:712px;width:80px;"><i class="c" style="width:60px">单线程模式</i></div>
<div class="sunk" style="left:1016px;top:735px;width:370px;height:48px;"></div>
<div class="trk" style="left:1368px;top:737px;width:16px;height:44px;"></div>
<div class="sb" style="left:1368px;top:737px"><svg width="16" height="16" viewBox="0 0 16 16" style="position:absolute;left:-1px;top:-1px"><path d="M4 9L7.5 5.5L11 9Z" fill="#fff" transform="translate(1,1)"/><path d="M4 9L7.5 5.5L11 9Z" fill="#808080"/></svg></div>
<div class="sb" style="left:1368px;top:765px"><svg width="16" height="16" viewBox="0 0 16 16" style="position:absolute;left:-1px;top:-1px"><path d="M4 6L7.5 9.5L11 6Z" fill="#fff" transform="translate(1,1)"/><path d="M4 6L7.5 9.5L11 6Z" fill="#808080"/></svg></div>
<div class="face" style="left:7px;top:798px;width:1384px;height:20px;"></div>
<div class="" style="left:7px;top:800px;width:1384px;height:18px;border:1px solid;border-color:#808080 #fff #fff #808080"></div>
<div class="t " style="left:9px;top:802px;width:400px;"><i class="a" style="width:222px">Down:0 Bytes/s | Up:0 Bytes/s (0 : 0)</i></div>
<svg style="left:1377px;top:804px" width="14" height="14" viewBox="0 0 14 14"><path d="M13 1L1 13M13 5L5 13M13 9L9 13" stroke="#808080" stroke-width="1.6"/><path d="M13 0L0 13M13 4L4 13M13 8L8 13" stroke="#fff" stroke-width="1"/></svg>
<div style="left:586px;top:235px;width:116px;height:438px;background:#d4d0c8;border:1px solid;border-color:#d4d0c8 #404040 #404040 #d4d0c8;box-shadow:inset 1px 1px 0 #fff,inset -1px -1px 0 #808080,2px 2px 2px rgba(0,0,0,.5)">
<div class="mi" style="top:2px"><div class="t " style="width:90px"><i class="c" style="width:36px">根目录</i></div></div>
<div class="mi" style="top:20px"><div class="t " style="width:90px"><i class="c" style="width:48px">刷新目录</i></div></div>
<div class="mi" style="top:38px"><div class="t dis" style="width:90px"><i class="c" style="width:48px">在线播放</i></div></div>
<div class="mi hl" style="top:56px"><div class="t w" style="width:90px"><i class="c" style="width:48px">默认下载</i></div></div>
<div class="mi" style="top:74px"><div class="t " style="width:90px"><i class="c" style="width:48px">同步下载</i></div></div>
<div class="mi" style="top:92px"><div class="t dis" style="width:90px"><i class="c" style="width:60px">自定义打开</i></div></div>
<div class="mi" style="top:110px"><div class="t dis" style="width:90px"><i class="c" style="width:48px">分享连接</i></div></div>
<div class="mi" style="top:128px"><div class="t dis" style="width:90px"><i class="c" style="width:36px">重命名</i></div></div>
<div class="mi" style="top:146px"><div class="t dis" style="width:90px"><i class="c" style="width:48px">删除项目</i></div></div>
<div class="mi" style="top:164px"><div class="t dis" style="width:90px"><i class="c" style="width:72px">设置用户推荐</i></div></div>
<div class="mi" style="top:182px"><div class="t " style="width:90px"><i class="c" style="width:72px">获取用户推荐</i></div></div>
<div class="mi" style="top:200px"><div class="t " style="width:90px"><i class="c" style="width:72px">清除用户推荐</i></div></div>
<div class="mi" style="top:218px"><div class="t dis" style="width:90px"><i class="c" style="width:48px">批量改名</i></div></div>
<div class="mi" style="top:236px"><div class="t " style="width:90px"><i class="c" style="width:36px">反空闲</i></div></div>
<div class="mi" style="top:254px"><div class="t dis" style="width:90px"><i class="c" style="width:48px">远程搜索</i></div></div>
<div class="mi" style="top:272px"><div class="t dis" style="width:90px"><i class="c" style="width:48px">本地搜索</i></div></div>
<div class="mi" style="top:290px"><div class="t dis" style="width:90px"><i class="c" style="width:24px">播放</i><i class="a" style="width:6px">(</i><i class="c" style="width:24px">字幕</i><i class="a" style="width:6px">)</i></div></div>
<div class="mi" style="top:308px"><div class="t dis" style="width:90px"><i class="c" style="width:48px">创建目录</i></div></div>
<div class="mi" style="top:326px"><div class="t dis" style="width:90px"><i class="c" style="width:48px">获取留言</i></div></div>
<div class="mi" style="top:344px"><div class="t dis" style="width:90px"><i class="c" style="width:48px">发送留言</i></div></div>
<div class="mi" style="top:362px"><div class="t dis" style="width:90px"><i class="c" style="width:48px">网络测速</i></div></div>
<div class="mi" style="top:380px"><div class="t dis" style="width:90px"><i class="c" style="width:48px">远程操作</i></div><svg style="left:99px;top:3px" width="8" height="10" viewBox="0 0 8 10"><path d="M1 1L5 4.5L1 8Z" fill="#fff" transform="translate(1,1)"/><path d="M1 1L5 4.5L1 8Z" fill="#808080"/></svg></div>
<div class="mi" style="top:398px"><div class="t " style="width:90px"><i class="c" style="width:48px">专业工具</i></div><svg style="left:99px;top:3px" width="8" height="10" viewBox="0 0 8 10"><path d="M1 1L5 4.5L1 8Z" fill="#000"/></svg></div>
<div class="mi" style="top:416px"><div class="t " style="width:90px"><i class="c" style="width:60px">管理员工具</i></div><svg style="left:99px;top:3px" width="8" height="10" viewBox="0 0 8 10"><path d="M1 1L5 4.5L1 8Z" fill="#000"/></svg></div>
</div>
</div></body></html>
